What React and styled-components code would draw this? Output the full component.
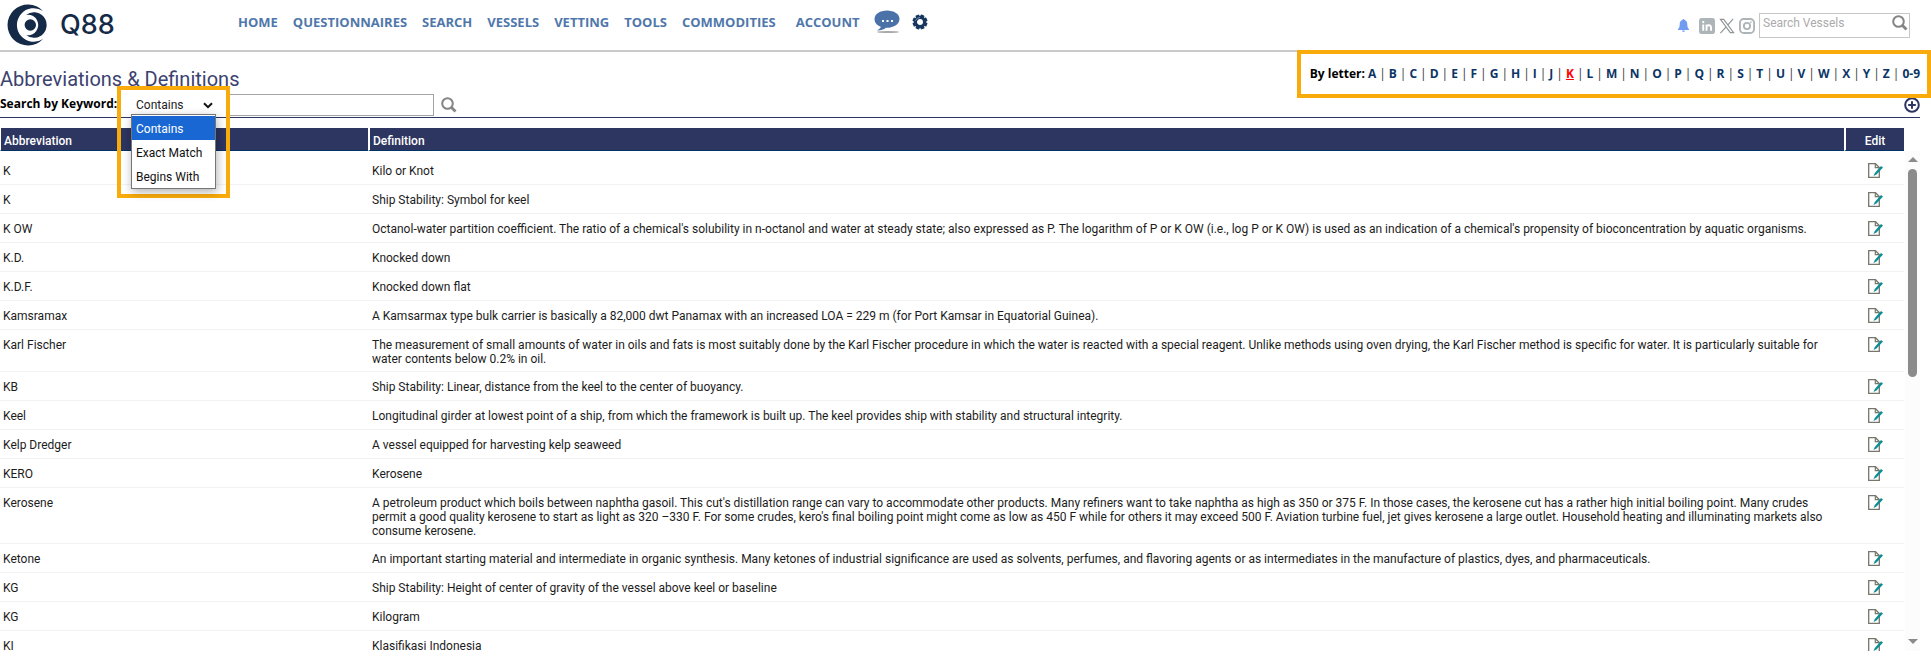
import React, { useState } from 'react';
import styled, { createGlobalStyle } from 'styled-components';

const GlobalStyle = createGlobalStyle`
  * {
    box-sizing: border-box;
  }

  body {
    margin: 0;
    background: #fff;
    color: #1c1c1c;
    font: 12px/14px Roboto, 'Liberation Sans', sans-serif;
  }

  a {
    color: inherit;
    text-decoration: none;
  }

  button {
    display: flex;
    padding: 0;
    border: 0;
    background: none;
    cursor: pointer;
  }

  svg {
    display: block;
  }
`;

const boldFont = `'Open Sans', 'Liberation Sans', sans-serif`;

const Header = styled.header`
  display: flex;
  align-items: flex-start;
  justify-content: space-between;
  height: 52px;
  border-bottom: 2px solid #c9c9c9;
`;

const Brand = styled.a`
  display: flex;
  align-items: center;
  gap: 11px;
  width: 238px;
  padding: 3px 0 0 7px;
  color: #152a47;
`;

const BrandName = styled.span`
  font: 500 27px/32px Inter, sans-serif;
`;

const Left = styled.div`
  display: flex;
`;

const Nav = styled.nav`
  display: flex;
  align-items: center;
  gap: 15px;
  height: 44px;
  color: #5077ab;
  font: 700 13px/16px ${boldFont};
`;

const NavLink = styled.a`
  margin-left: ${(props) => (props.$spaced ? '5px' : '0')};
`;

const NavIcons = styled.div`
  display: flex;
  align-items: center;
  gap: 12px;
`;

const Tools = styled.div`
  display: flex;
  align-items: center;
  gap: 4px;
  padding: 13px 21px 0 0;
`;

const BellButton = styled.button`
  margin: 0 6px 0 0;
`;

const VesselSearch = styled.form`
  display: flex;
  align-items: flex-start;
  justify-content: space-between;
  width: 151px;
  height: 25px;
  padding: 1px 1px 0 3px;
  border: 1px solid #c6c6c6;
`;

const VesselInput = styled.input`
  width: 120px;
  height: 16px;
  padding: 0;
  border: 0;
  outline: 0;
  font: 12px/16px Roboto, sans-serif;

  &::placeholder {
    color: #ababab;
    opacity: 1;
  }
`;

const Main = styled.main`
  padding-right: 11px;
`;

const TitleBar = styled.div`
  display: flex;
  align-items: flex-start;
  justify-content: space-between;
  height: 38px;
`;

const Title = styled.h1`
  margin: 0;
  padding-top: 15px;
  color: #3c4270;
  font: 400 20px/24px Roboto, sans-serif;
`;

const Letters = styled.nav`
  display: flex;
  gap: 3px;
  padding-top: 14px;
  color: #333;
  font: 700 12px/16px ${boldFont};
`;

const LettersLabel = styled.span`
  color: #000;
`;

const Bar = styled.span`
  font-weight: 400;
`;

const Letter = styled.a`
  color: ${(props) => (props.$active ? '#f00' : '#0b3566')};
  text-decoration: ${(props) => (props.$active ? 'underline' : 'none')};
`;

const KeywordBar = styled.form`
  display: flex;
  align-items: flex-start;
  height: 28px;
  border-bottom: 1px solid #2d3561;
`;

const KeywordLabel = styled.label`
  width: 121px;
  padding-top: 6px;
  color: #000;
  font: 700 12px/16px ${boldFont};
`;

const SelectBox = styled.div`
  position: relative;
  display: flex;
  align-items: center;
  width: 107px;
  height: 24px;
  padding-top: 6px;
`;

const Select = styled.select`
  width: 100%;
  height: 20px;
  padding: 0 0 0 15px;
  border: 0;
  outline: 0;
  appearance: none;
  background: none;
  color: #222;
  font: 12px/20px Roboto, sans-serif;
`;

const SelectArrow = styled.svg`
  position: absolute;
  right: 15px;
  top: 12px;
  pointer-events: none;
`;

const Menu = styled.ul`
  position: absolute;
  z-index: 3;
  top: 24px;
  left: 10px;
  width: 85px;
  margin: 0;
  padding: 1px 0 0;
  border: 1px solid #767676;
  background: #fff;
  box-shadow: 1px 3px 9px rgba(0, 0, 0, 0.3);
  list-style: none;
`;

const MenuItem = styled.li`
  height: 24px;
  padding-left: 4px;
  background: ${(props) => (props.$active ? '#1967d2' : '#fff')};
  color: ${(props) => (props.$active ? '#fff' : '#111')};
  font: 12px/26px Roboto, sans-serif;
`;

const KeywordInput = styled.input`
  width: 206px;
  height: 22px;
  margin: 4px 7px 0 0;
  border: 1px solid #a3a3a3;
  outline: 0;
  font: inherit;
`;

const SearchButton = styled.button`
  margin-top: 7px;
`;

const AddButton = styled.button`
  margin: 7px 0 0 auto;
`;

/* Orange callouts laid over the page */
const Callout = styled.div`
  position: absolute;
  z-index: 2;
  border: 4px solid #f9ab0b;
  pointer-events: none;
`;

const FilterCallout = styled(Callout)`
  top: -4px;
  left: -4px;
  width: 113px;
  height: 112px;
`;

const LettersCallout = styled(Callout)`
  top: 50px;
  right: 0;
  width: 634px;
  height: 48px;
`;

const TableArea = styled.section`
  display: flex;
  height: 533px;
  padding-top: 10px;
`;

const Scroller = styled.div`
  flex: 1;
  overflow-y: auto;
  scrollbar-width: none;
`;

const Table = styled.table`
  width: 100%;
  table-layout: fixed;
  border-collapse: separate;
  border-spacing: 0;

  tbody::before {
    content: '';
    display: block;
    height: 5px;
  }
`;

const Th = styled.th`
  position: sticky;
  top: 0;
  width: ${(props) => props.$width || 'auto'};
  height: 23px;
  padding: 3px 3px 0;
  border-left: ${(props) => props.$edge || '2px'} solid #fff;
  border-bottom: 1px solid #003366;
  background: #2d3561;
  color: #fff;
  font-weight: 500;
  text-align: ${(props) => props.$align || 'left'};
`;

const Td = styled.td`
  padding: 8px 10px 5px 3px;
  border-bottom: 1px solid #f2f2f2;
  vertical-align: top;
`;

const DefinitionCell = styled(Td)`
  padding-left: 4px;
`;

const EditCell = styled(Td)`
  padding: 7px 0 6px 24px;
`;

const ScrollTrack = styled.div`
  display: flex;
  flex-direction: column;
  align-items: center;
  width: 15px;
  margin: 23px 0 0 1px;
  padding: 6px 0 7px;
  background: #fcfcfc;
`;

const ScrollArrow = styled.svg`
  flex: none;
  margin-top: ${(props) => (props.$down ? 'auto' : '0')};
`;

const ScrollThumb = styled.div`
  width: 9px;
  height: 208px;
  margin-top: 7px;
  border-radius: 5px;
  background: #8b8b8b;
`;

const navItems = ['Home', 'Questionnaires', 'Search', 'Vessels', 'Vetting', 'Tools', 'Commodities', 'Account'];

const letters = [...'ABCDEFGHIJKLMNOPQRSTUVWXYZ', '0-9'];

const matchModes = ['Contains', 'Exact Match', 'Begins With'];

const entries = [
  ['K', 'Kilo or Knot'],
  ['K', 'Ship Stability: Symbol for keel'],
  [
    'K OW',
    "Octanol-water partition coefficient. The ratio of a chemical's solubility in n-octanol and water at steady state; also expressed as P. The logarithm of P or K OW (i.e., log P or K OW) is used as an indication of a chemical's propensity of bioconcentration by aquatic organisms.",
  ],
  ['K.D.', 'Knocked down'],
  ['K.D.F.', 'Knocked down flat'],
  [
    'Kamsramax',
    'A Kamsarmax type bulk carrier is basically a 82,000 dwt Panamax with an increased LOA = 229 m (for Port Kamsar in Equatorial Guinea).',
  ],
  [
    'Karl Fischer',
    'The measurement of small amounts of water in oils and fats is most suitably done by the Karl Fischer procedure in which the water is reacted with a special reagent. Unlike methods using oven drying, the Karl Fischer method is specific for water. It is particularly suitable for water contents below 0.2% in oil.',
  ],
  ['KB', 'Ship Stability: Linear, distance from the keel to the center of buoyancy.'],
  [
    'Keel',
    'Longitudinal girder at lowest point of a ship, from which the framework is built up. The keel provides ship with stability and structural integrity.',
  ],
  ['Kelp Dredger', 'A vessel equipped for harvesting kelp seaweed'],
  ['KERO', 'Kerosene'],
  [
    'Kerosene',
    "A petroleum product which boils between naphtha gasoil. This cut's distillation range can vary to accommodate other products. Many refiners want to take naphtha as high as 350 or 375 F. In those cases, the kerosene cut has a rather high initial boiling point. Many crudes permit a good quality kerosene to start as light as 320 –330 F. For some crudes, kero's final boiling point might come as low as 450 F while for others it may exceed 500 F. Aviation turbine fuel, jet gives kerosene a large outlet. Household heating and illuminating markets also consume kerosene.",
  ],
  [
    'Ketone',
    'An important starting material and intermediate in organic synthesis. Many ketones of industrial significance are used as solvents, perfumes, and flavoring agents or as intermediates in the manufacture of plastics, dyes, and pharmaceuticals.',
  ],
  ['KG', 'Ship Stability: Height of center of gravity of the vessel above keel or baseline'],
  ['KG', 'Kilogram'],
  ['KI', 'Klasifikasi Indonesia'],
];

const LogoMark = () => (
  <svg width="42" height="44" viewBox="0 0 42 44" fill="#152a47">
    <path d="M36 8A20.500 20.500 0 1 0 36 36A16.800 16.800 0 1 1 36 8Z" />
    <path d="M19 12A12.750 12.750 0 1 1 19 32A10.200 10.200 0 1 0 19 12Z" />
    <circle cx="23.300" cy="22" r="5.700" />
  </svg>
);

const ChatIcon = () => (
  <svg width="26" height="24" viewBox="0 0 26 24">
    <ellipse cx="14" cy="22" rx="11" ry="1" fill="#a9a9a9" />
    <path d="M13 0.500C6 0.500 0.500 4 0.500 9C0.500 12.500 3 15.500 7 17C6 18.500 4.500 19.800 3 20.500C7 20.500 10 19.500 12 17.800C20 18 25.500 14 25.500 9C25.500 4 20 0.500 13 0.500Z" fill="#4a72a8" />
    <path d="M8 10h2v2h-2zM12.500 10h2v2h-2zM17 10h2v2h-2z" fill="#fff" />
  </svg>
);

const teeth = [0, 45, 90, 135, 180, 225, 270, 315];

const GearIcon = () => (
  <svg width="16" height="16" viewBox="0 0 16 16">
    {teeth.map((angle) => (
      <rect key={angle} x="6" y="0.500" width="4" height="4" rx="0.800" fill="#17375f" transform={`rotate(${angle + 22} 8 8)`} />
    ))}
    <circle cx="8" cy="8" r="4.500" fill="none" stroke="#17375f" strokeWidth="3" />
    <path d="M3.500 6.500A5 5 0 0 1 8 3.500" fill="none" stroke="#7d93b3" />
  </svg>
);

const BellIcon = () => (
  <svg width="11" height="13" viewBox="0 0 11 13" fill="#6f9bf0">
    <path d="M5.500 0C6.200 0 6.400 0.500 6.400 1.100C8.500 1.600 9.300 3.200 9.300 5.200C9.300 8 9.800 9 11 10.200V11H0V10.200C1.200 9 1.700 8 1.700 5.200C1.700 3.200 2.500 1.600 4.600 1.100C4.600 0.500 4.800 0 5.500 0ZM4 11.600H7C6.800 12.600 6.200 13 5.500 13C4.800 13 4.200 12.600 4 11.600Z" />
  </svg>
);

const LinkedInIcon = () => (
  <svg width="16" height="16" viewBox="0 0 17 17">
    <rect width="17" height="17" rx="3" fill="#aeb5b8" />
    <circle cx="4.500" cy="4.500" r="1.200" fill="#fff" />
    <path d="M4.500 7v6.500M8 7v6.500M8 10C8 7.400 12.800 6.500 12.800 10V13.500" fill="none" stroke="#fff" strokeWidth="2" />
  </svg>
);

const XIcon = () => (
  <svg width="16" height="16" viewBox="0 0 17 17" fill="none" stroke="#8f9496">
    <path d="M1.500 1.500H5L15.500 15.500H12ZM15 1L9.500 7.300M7.300 9.600L1.500 16" strokeWidth="1.200" />
  </svg>
);

const InstagramIcon = () => (
  <svg width="16" height="16" viewBox="0 0 17 17" fill="none" stroke="#aeb5b8" strokeWidth="2">
    <rect x="1" y="1" width="15" height="15" rx="4" />
    <circle cx="8.500" cy="8.500" r="3.300" />
    <circle cx="12.600" cy="4.300" r="0.900" fill="#aeb5b8" stroke="none" />
  </svg>
);

const SearchIcon = () => (
  <svg width="16" height="16" viewBox="0 0 16 16" fill="none" stroke="#858585">
    <circle cx="6.500" cy="6.500" r="5.300" strokeWidth="2" />
    <path d="M10.500 10.500L14.500 14.500" strokeWidth="2.800" />
  </svg>
);

const AddIcon = () => (
  <svg width="16" height="16" viewBox="0 0 16 16" fill="none" stroke="#2d3561" strokeWidth="2">
    <circle cx="8" cy="8" r="6.800" />
    <path d="M8 4.200v7.600M4.200 8h7.600" />
  </svg>
);

const EditIcon = () => (
  <svg width="15" height="15" viewBox="0 0 15 15">
    <path d="M0.700 0.700H7.500L11.300 4.500V14.300H0.700Z" fill="#fff" stroke="#77766b" strokeWidth="1.300" />
    <path d="M7.300 1v3.600h3.600" fill="none" stroke="#77766b" strokeWidth="1.200" />
    <path d="M13 3L15 4.500L8.500 11.500L5.500 13L6.800 10Z" fill="#0b8f94" />
  </svg>
);

const App = () => {
  const [mode, setMode] = useState('Contains');
  const [open, setOpen] = useState(true);
  const [letter, setLetter] = useState('K');

  const pickMode = (value) => {
    setMode(value);
    setOpen(false);
  };

  return (
    <>
      <GlobalStyle />
      <Header>
        <Left>
          <Brand href="#home">
            <LogoMark />
            <BrandName>Q88</BrandName>
          </Brand>
          <Nav>
            {navItems.map((item) => (
              <NavLink key={item} href={`#${item.toLowerCase()}`} $spaced={item === 'Account'}>
                {item.toUpperCase()}
              </NavLink>
            ))}
            <NavIcons>
              <button type="button" aria-label="Messages">
                <ChatIcon />
              </button>
              <button type="button" aria-label="Settings">
                <GearIcon />
              </button>
            </NavIcons>
          </Nav>
        </Left>
        <Tools>
          <BellButton type="button" aria-label="Notifications">
            <BellIcon />
          </BellButton>
          <a href="#linkedin" aria-label="LinkedIn">
            <LinkedInIcon />
          </a>
          <a href="#x" aria-label="X">
            <XIcon />
          </a>
          <a href="#instagram" aria-label="Instagram">
            <InstagramIcon />
          </a>
          <VesselSearch onSubmit={(e) => e.preventDefault()}>
            <VesselInput placeholder="Search Vessels" aria-label="Search Vessels" />
            <button type="submit" aria-label="Search">
              <SearchIcon />
            </button>
          </VesselSearch>
        </Tools>
      </Header>

      <Main>
        <TitleBar>
          <Title>Abbreviations &amp; Definitions</Title>
          <Letters>
            <LettersLabel>By letter:</LettersLabel>
            {letters.map((item, i) => (
              <React.Fragment key={item}>
                {i > 0 && <Bar>|</Bar>}
                <Letter href={`#${item}`} $active={item === letter} onClick={() => setLetter(item)}>
                  {item}
                </Letter>
              </React.Fragment>
            ))}
          </Letters>
        </TitleBar>
        <LettersCallout />

        <KeywordBar onSubmit={(e) => e.preventDefault()}>
          <KeywordLabel htmlFor="keyword">Search by Keyword:</KeywordLabel>
          <SelectBox>
            <Select aria-label="Match" value={mode} onChange={(e) => pickMode(e.target.value)}>
              {matchModes.map((item) => (
                <option key={item}>{item}</option>
              ))}
            </Select>
            <SelectArrow width="10" height="7" viewBox="0 0 10 7" fill="none" stroke="#111" strokeWidth="2">
              <path d="M1 1.200L5 5.200L9 1.200" />
            </SelectArrow>
            <FilterCallout />
            {open && (
              <Menu>
                {matchModes.map((item) => (
                  <MenuItem key={item} $active={item === mode} onClick={() => pickMode(item)}>
                    {item}
                  </MenuItem>
                ))}
              </Menu>
            )}
          </SelectBox>
          <KeywordInput id="keyword" />
          <SearchButton type="submit" aria-label="Search">
            <SearchIcon />
          </SearchButton>
          <AddButton type="button" aria-label="Add">
            <AddIcon />
          </AddButton>
        </KeywordBar>

        <TableArea>
          <Scroller>
            <Table>
              <thead>
                <tr>
                  <Th $width="368px" $edge="1px">
                    Abbreviation
                  </Th>
                  <Th>Definition</Th>
                  <Th $width="60px" $align="center">
                    Edit
                  </Th>
                </tr>
              </thead>
              <tbody>
                {entries.map(([abbreviation, definition], i) => (
                  <tr key={i}>
                    <Td>{abbreviation}</Td>
                    <DefinitionCell>{definition}</DefinitionCell>
                    <EditCell>
                      <button type="button" aria-label={`Edit ${abbreviation}`}>
                        <EditIcon />
                      </button>
                    </EditCell>
                  </tr>
                ))}
              </tbody>
            </Table>
          </Scroller>
          <ScrollTrack>
            <ScrollArrow width="10" height="5" viewBox="0 0 10 5" fill="#8b8b8b">
              <path d="M0 5L5 0L10 5Z" />
            </ScrollArrow>
            <ScrollThumb />
            <ScrollArrow width="10" height="5" viewBox="0 0 10 5" fill="#8b8b8b" $down>
              <path d="M0 0L5 5L10 0Z" />
            </ScrollArrow>
          </ScrollTrack>
        </TableArea>
      </Main>
    </>
  );
};

export default App;
